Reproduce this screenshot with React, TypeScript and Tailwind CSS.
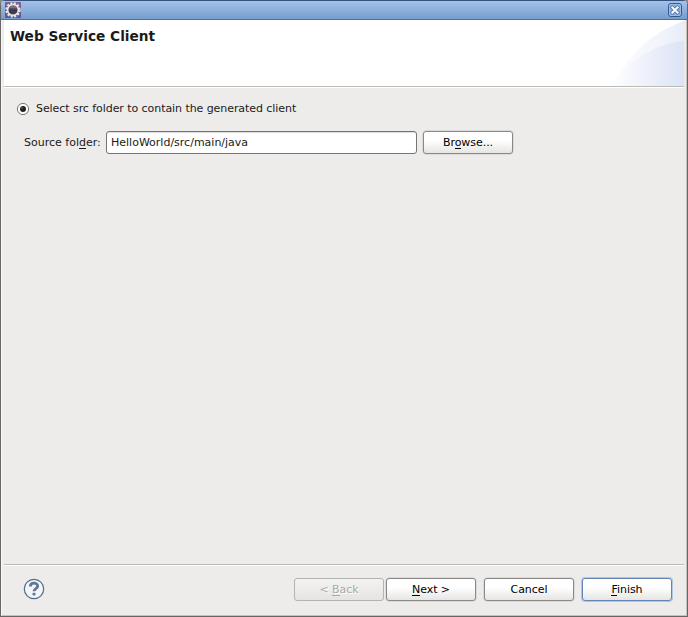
import type { ReactNode } from "react";

function Key({ children }: { children: string }) {
  return <span className="bg-linear-to-t from-current from-[1px] to-transparent to-[1px] bg-no-repeat">{children}</span>;
}

type ButtonProps = { children: ReactNode; variant?: "normal" | "disabled" | "default" };

const looks = {
  normal: "border-[#8b8987] bg-linear-to-b from-white from-40% to-[#e6e5e3] text-black shadow-[0_0_0_0.5px_#c9c8c6]",
  disabled: "border-[#b5b3b0] bg-linear-to-b from-[#f3f3f2] to-[#e6e4e2] text-[#aaa8a5] [text-shadow:1px_1px_0_#fff]",
  default: "border-[#6285b5] bg-linear-to-b from-white from-40% to-[#e6e5e3] text-black shadow-[0_0_0_1px_#b5c7df]",
};

function Button({ children, variant = "normal" }: ButtonProps) {
  return (
    <button
      disabled={variant === "disabled"}
      className={`h-[23px] w-[90px] shrink-0 rounded-[3px] border pb-px text-center leading-[13px] tracking-[-0.05px] ${looks[variant]}`}
    >
      {children}
    </button>
  );
}

function GearIcon() {
  return (
    <svg className="h-4 w-4" viewBox="0 0 16 16">
      <rect width="16" height="16" fill="#63579a" />
      <rect width="16" height="4" fill="#81619b" />
      <circle cx="8" cy="8" r="6.4" fill="none" stroke="#e8e5e3" strokeWidth="2.6" strokeDasharray="2 1.351" />
      <circle cx="8" cy="8" r="5.4" fill="#4a4358" stroke="#e8e5e3" strokeWidth="1.7" />
      <path d="M3.8 6.2A4.6 4.6 0 0 1 12.2 6.2Z" fill="#77737d" />
      <path d="M4 8.5H12M4.4 10.3H11.6" stroke="#383249" strokeWidth="1" />
    </svg>
  );
}

function CloseIcon() {
  return (
    <svg className="h-[15px] w-[15px]" viewBox="0 0 15 15">
      <rect x=".5" y=".5" width="13" height="13" rx="2.5" fill="#84aadc" stroke="#37598a" />
      <rect x="1.5" y="1.5" width="11" height="11" rx="1.5" fill="none" stroke="#9dbce5" />
      <path d="M4.5 4.5L9.5 9.5M9.5 4.5L4.5 9.5" stroke="#5379ad" strokeWidth="3.7" strokeLinecap="square" />
      <path d="M4.4 4.4L9.6 9.6M9.6 4.4L4.4 9.6" stroke="white" strokeWidth="2" strokeLinecap="square" />
    </svg>
  );
}

function Banner() {
  return (
    <svg className="h-[66px] w-[80px]" viewBox="0 0 80 66">
      <defs>
        <linearGradient id="outer">
          <stop offset="0" stopColor="#fff" />
          <stop offset="1" stopColor="#e9eefa" />
        </linearGradient>
        <linearGradient id="middle">
          <stop offset="0" stopColor="#fbfcff" />
          <stop offset="1" stopColor="#e7ecf8" />
        </linearGradient>
        <linearGradient id="inner">
          <stop offset="0" stopColor="#fff" />
          <stop offset="1" stopColor="#dbe3f5" />
        </linearGradient>
      </defs>
      <path d="M6 66C24 36 48 12 80 1V66Z" fill="url(#outer)" />
      <path d="M34 42C48 22 61 9 80 1V42Z" fill="url(#middle)" />
      <path d="M6 66C24 40 50 24 80 21V66Z" fill="url(#inner)" />
    </svg>
  );
}

function HelpIcon() {
  return (
    <svg className="h-[22px] w-[22px]" viewBox="0 0 22 22">
      <circle cx="11" cy="11" r="9.7" fill="#f4f5f7" stroke="#526d92" strokeWidth="1.2" />
      <path d="M7.3 8.4C7.3 4.2 14.7 4.1 14.7 8C14.7 10.5 11 10.6 11 13.3" fill="none" stroke="#607999" strokeWidth="2.8" />
      <rect x="9.5" y="14.8" width="3" height="2.8" rx=".8" fill="#607999" />
    </svg>
  );
}

export default function App() {
  return (
    <div className="h-[617px] w-[688px] bg-[#8d8a87] font-['DejaVu_Sans',sans-serif] text-[11px] leading-[13px] text-[#1a1a1a]">
      <div className="flex h-full flex-col overflow-hidden rounded-t-[5px] border border-t-0 border-[#686562] bg-[#edeceb]">
        <header className="flex h-5 shrink-0 items-center justify-between border-t border-b border-t-[#34547f] border-b-[#4b70a5] bg-linear-to-b from-[#a5c2e9] to-[#759dce] pr-[4px] pl-[4px]">
          <GearIcon />
          <CloseIcon />
        </header>
        <div className="flex grow flex-col border-r border-b border-l border-r-[#c5c2c0] border-b-[#c5c2c0] border-l-[#faf9f8] pr-[2px] pl-[2px]">
          <section className="flex h-[67px] shrink-0 justify-between border-b border-[#bdbbb8] bg-white">
            <h1 className="pt-2 pl-[6px] text-[13.7px] leading-4 font-bold">Web Service Client</h1>
            <Banner />
          </section>
          <main className="grow border-t border-white">
            <label className="mt-[14px] ml-3 flex h-[13px] items-center">
              <svg className="mr-[6px] h-[14px] w-[14px]" viewBox="0 0 14 14">
                <circle cx="7" cy="7" r="5.6" fill="white" stroke="#797775" />
                <circle cx="7" cy="7" r="3" fill="#202020" />
                <circle cx="6" cy="6" r=".8" fill="#777" />
              </svg>
              <span className="tracking-[-0.065px]">Select src folder to contain the generated client</span>
            </label>
            <div className="mt-[16px] flex items-center pl-5">
              <span className="w-[82px] pb-px">Source fol<Key>d</Key>er:</span>
              <input
                className="mr-[6px] h-[23px] w-[311px] rounded-[3px] border border-[#777573] bg-white px-1 pb-px shadow-[inset_0_1px_0_#dedddd]"
                defaultValue="HelloWorld/src/main/java"
              />
              <Button>Br<Key>o</Key>wse...</Button>
            </div>
          </main>
          <footer className="flex h-[51px] shrink-0 items-start border-t border-[#bdbbb8]">
            <div className="flex w-full items-start border-t border-white pt-3 pr-3 pl-[19px]">
              <HelpIcon />
              <div className="ml-auto flex gap-2">
                <div className="flex gap-[2px]">
                  <Button variant="disabled">&lt; <Key>B</Key>ack</Button>
                  <Button><Key>N</Key>ext &gt;</Button>
                </div>
                <Button>Cancel</Button>
                <Button variant="default"><Key>F</Key>inish</Button>
              </div>
            </div>
          </footer>
        </div>
      </div>
    </div>
  );
}
